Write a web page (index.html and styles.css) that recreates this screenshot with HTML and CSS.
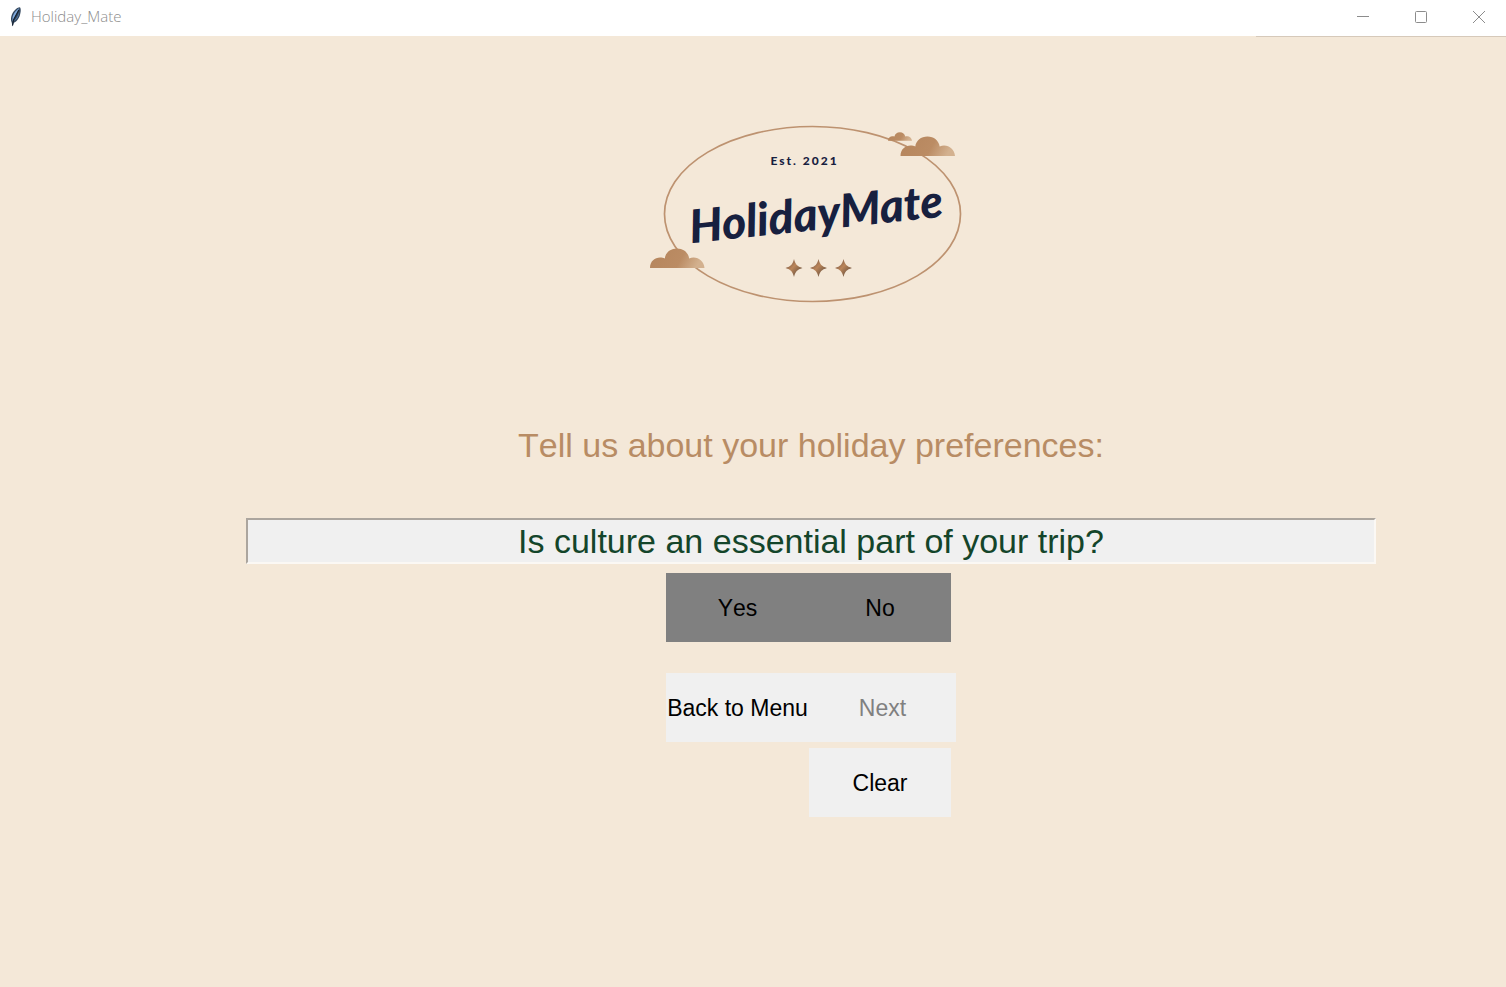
FILE: index.html
```html
<!DOCTYPE html>
<html lang="en">
<head>
<meta charset="utf-8">
<title>Holiday_Mate</title>
<link rel="stylesheet" href="styles.css">
</head>
<body>
<header class="titlebar">
  <svg class="app-icon" width="14" height="20" viewBox="0 0 14 20" aria-hidden="true">
    <path d="M11 .3C7.500.3 3.500 5 2.300 9.500c-.6 2.500-.3 4.500.4 6L3.500 19.500l1.300-3.700C8 14.500 10.500 11 11.300 6.500 11.900 4 12 2 11 .3z" fill="#34485f"/>
    <path d="M10.300 1.300C7.500 2.500 4.500 6.500 3.500 10.500l-.2 4C5.500 10.500 8.800 5 10.300 1.300z" fill="#7fa9dc"/>
    <path d="M10.300 5c-1 3.500-3 6.500-5.300 9 2.800-1.500 5-5 5.300-9z" fill="#5b88bf"/>
    <path d="M9.800 3 4.500 13l-1 5.500" fill="none" stroke="#15202e" stroke-width="1.200"/>
  </svg>
  <span class="app-title">Holiday_Mate</span>
  <div class="window-controls">
    <button type="button" aria-label="Minimize"><svg width="12" height="12" viewBox="0 0 12 12"><path d="M0 5.500h12"/></svg></button>
    <button type="button" aria-label="Maximize"><svg width="12" height="12" viewBox="0 0 12 12"><rect x=".5" y=".5" width="11" height="11" rx="1"/></svg></button>
    <button type="button" aria-label="Close"><svg width="12" height="12" viewBox="0 0 12 12"><path d="M0 0l12 12M12 0 0 12"/></svg></button>
  </div>
</header>
<main class="page">
  <svg class="logo" width="332" height="190" viewBox="645 120 332 190" role="img" aria-label="HolidayMate, Est. 2021">
    <defs>
      <linearGradient id="cloud" x1="0" y1="0" x2="1" y2=".2">
        <stop offset="0" stop-color="#b5855c"/><stop offset=".65" stop-color="#bb8c64"/><stop offset="1" stop-color="#d3b18f"/>
      </linearGradient>
      <linearGradient id="star" x1="0" y1="0" x2="1" y2="1">
        <stop offset="0.150" stop-color="#7a5a48"/><stop offset=".45" stop-color="#bb8559"/><stop offset=".85" stop-color="#66503f"/>
      </linearGradient>
      <path id="cloud-shape" d="M0 20C0 13 5 9.500 10 9.500c2 0 3.400.3 4.800 1C15.500 4.500 20.500.5 27 .5s11.200 4 12.200 10C46.500 7.500 54 12.500 54.500 20z" fill="url(#cloud)"/>
      <path id="star-shape" d="M0-9C1.500-3.500 3-1.700 8.500 0 3 1.700 1.500 3.500 0 9-1.500 3.500-3 1.700-8.500 0-3-1.700-1.500-3.500 0-9z" fill="url(#star)"/>
    </defs>
    <ellipse cx="812.500" cy="214" rx="148" ry="87.500" fill="none" stroke="#bd9270" stroke-width="1.700"/>
    <use href="#cloud-shape" x="650" y="248"/>
    <use href="#cloud-shape" x="900.500" y="136"/>
    <use href="#cloud-shape" transform="translate(888 132) scale(.44)"/>
    <text class="logo-est" x="804.500" y="165" text-anchor="middle">Est. 2021</text>
    <text class="logo-name" x="816" y="230" text-anchor="middle" transform="rotate(-6 816 214)">HolidayMate</text>
    <use href="#star-shape" x="794" y="268"/>
    <use href="#star-shape" x="818.500" y="268"/>
    <use href="#star-shape" x="843.500" y="268"/>
  </svg>
  <h1 class="heading">Tell us about your holiday preferences:</h1>
  <p class="question" id="question">Is culture an essential part of your trip?</p>
  <div class="answers" role="group" aria-labelledby="question">
    <button type="button" class="btn answer">Yes</button>
    <button type="button" class="btn answer short">No</button>
  </div>
  <div class="actions">
    <button type="button" class="btn">Back to Menu</button>
    <button type="button" class="btn" disabled>Next</button>
    <button type="button" class="btn clear short">Clear</button>
  </div>
</main>
</body>
</html>
```

FILE: styles.css
```css
* { box-sizing: border-box; }

body {
  display: flex;
  flex-direction: column;
  min-height: 100vh;
  margin: 0;
  background: #f4e8d8;
  font-family: "Liberation Sans", Arial, sans-serif;
  font-kerning: none;
}

.titlebar {
  display: flex;
  align-items: center;
  height: 37px;
  padding: 0 0 4px 9px;
  background:
    linear-gradient(#d6c9ba, #d6c9ba) right bottom / 250px 1px no-repeat,
    linear-gradient(#f4e8d8, #f4e8d8) left bottom / 100% 1px no-repeat,
    #fff;
}

.app-icon { margin-right: 8px; }

.app-title {
  padding-bottom: 1px;
  color: #8c8c8c;
  font: 300 15px/20px "Open Sans", sans-serif;
}

.window-controls {
  display: flex;
  align-self: stretch;
  margin-left: auto;
}

.window-controls button {
  display: flex;
  align-items: center;
  justify-content: center;
  width: 58px;
  padding: 0 0 0 3px;
  border: 0;
  background: none;
}

.window-controls svg {
  fill: none;
  stroke: #8c8c8c;
  stroke-width: 1;
}

.page {
  display: flex;
  flex: 1;
  flex-direction: column;
  align-items: center;
  padding: 83px 130px 40px 246px;
}

.logo-est {
  fill: #17203f;
  font: 900 12px Lato, sans-serif;
  letter-spacing: 2px;
}

.logo-name {
  fill: #17203f;
  font: italic 900 46px Lato, sans-serif;
}

.heading {
  margin: 115px 0 53px;
  color: #b88c64;
  font-size: 34px;
  font-weight: 400;
  line-height: 40px;
}

.question {
  align-self: stretch;
  margin: 0;
  padding: 2px 0 1px;
  border: 2px solid;
  border-color: #aba59e #fbf8f4 #fbf8f4 #aba59e;
  background: #f0f0f0;
  color: #14452a;
  font-size: 34px;
  line-height: 39px;
  text-align: center;
}

.answers,
.actions {
  display: grid;
  grid-template-columns: 143px 147px;
}

.answers { margin: 9px 0 31px; }

.actions { row-gap: 6px; }

.btn {
  height: 69px;
  padding: 0;
  border: 0;
  background: #f0f0f0;
  color: #000;
  font: 23px/28px "Liberation Sans", Arial, sans-serif;
  font-kerning: none;
  white-space: nowrap;
}

.btn:disabled { color: #808080; }

.answer { background: #808080; }

.short { width: 142px; }

.clear { grid-column: 2; }
```
